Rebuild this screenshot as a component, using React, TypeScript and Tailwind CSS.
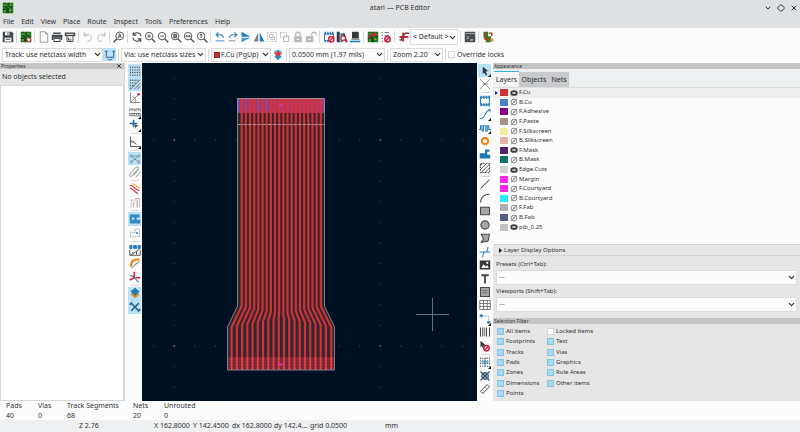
import type { ReactNode } from 'react';
import clsx from 'clsx';
import { ChevronDown, Diamond, X } from 'lucide-react';

type Tool = { name: string; icon: ReactNode; active?: boolean; more?: boolean };

const DARK = '#45484b';
const GREY = '#b4b6b8';
const BLUE = '#2a7fbd';
const RED = '#d2213b';
const ORANGE = '#ee8a1c';

function Icon({ color = DARK, w = 1.4, children }: { color?: string; w?: number; children: ReactNode }) {
  return (
    <svg viewBox="0 0 16 16" className="size-3 shrink-0" fill="none" stroke={color} strokeWidth={w} aria-hidden="true">
      {children}
    </svg>
  );
}

function Magnifier({ children }: { children?: ReactNode }) {
  return (
    <Icon w={1.2}>
      <circle cx="6.8" cy="6.8" r="5" />
      <path d="M10.5 10.5 15 15" strokeWidth="1.8" />
      {children}
    </Icon>
  );
}

function BoardIcon() {
  return (
    <>
      <rect x="1" y="1" width="14" height="14" fill="#1e7a25" stroke="none" />
      <path d="M4 1v5l4 3v6M9 1v4l5 3M1 10h4l2 4" stroke="#0d3f12" strokeWidth="1.4" />
      <path d="M3 3h2v2H3zM10 3h2v2h-2zM3 11h2v2H3zM10 10h2v2h-2z" fill="#a8ae35" stroke="none" />
    </>
  );
}

function NoEntry({ x = 11, y = 11 }: { x?: number; y?: number }) {
  return (
    <g transform={`translate(${x} ${y})`}>
      <circle r="3.6" fill="#fff" stroke={RED} strokeWidth="2" />
      <path d="M-2.4 2.4 2.4 -2.4" stroke={RED} strokeWidth="2" />
    </g>
  );
}

const gridDots = [3, 6.5, 10, 13.5].flatMap((y) => [2, 5, 8, 11, 14].map((x) => [x, y]));

function Dots({ half }: { half?: boolean }) {
  return (
    <g fill={DARK} stroke="none">
      {gridDots
        .filter(([x, y]) => !half || x + y < 16)
        .map(([x, y]) => <circle key={`${x}-${y}`} cx={x} cy={y} r=".9" />)}
    </g>
  );
}

const fileTools: Tool[][] = [
  [{
    name: 'Save',
    icon: (
      <Icon>
        <path d="M1 1h12l2 2v12H1z" fill={DARK} stroke="none" />
        <path d="M4 1.5h6v4H4zM3.5 9h9v5h-9z" fill="#fff" stroke="none" />
        <path d="M8 2v3M5 11h6" />
      </Icon>
    ),
  }],
  [{
    name: 'Board setup',
    icon: <Icon><BoardIcon /><circle cx="11.5" cy="11.5" r="2.6" fill="#fff" stroke={RED} strokeWidth="2" strokeDasharray="1.6 .8" /></Icon>,
  }],
  [
    { name: 'Page settings', icon: <Icon color="#8f9193" w={1.2}><path d="M3 1h7l3 3v11H3zM10 1v3h3" /></Icon> },
    {
      name: 'Print',
      icon: <Icon><path d="M3 2h10v2H3zM1 5h14v7h-2V9H3v3H1z" fill={DARK} stroke="none" /><path d="M4 10h8v4H4z" /></Icon>,
    },
    {
      name: 'Plot',
      icon: (
        <Icon>
          <path d="M1 2h14v5H1z" fill={DARK} stroke="none" />
          <path d="M3 4.5h10" stroke="#ddd" />
          <path d="M4 7v7h8V7M6 9v3h4" strokeWidth="1.3" />
        </Icon>
      ),
    },
  ],
  [
    { name: 'Undo', icon: <Icon color={GREY} w={1.3}><path d="M3 2v4.5h4.5M3 6.5C6 3 12.5 4 12.5 9c0 3-2 5-5.500 5" /></Icon> },
    { name: 'Redo', icon: <Icon color={GREY} w={1.3}><path d="M13 2v4.5H8.5M13 6.5C10 3 3.500 4 3.500 9c0 3 2 5 5.500 5" /></Icon> },
  ],
  [{
    name: 'Find',
    icon: <Icon w={1.2}><circle cx="9" cy="6.5" r="5.2" /><path d="M5.2 10.3 1 15" strokeWidth="2" /><path d="M7 9l2-5.500L11 9M7.5 7.5h3" /></Icon>,
  }],
  [
    { name: 'Refresh', icon: <Icon><path d="M2.5 9a5.700 5.700 0 0 0 10.4 2M13.5 7A5.700 5.700 0 0 0 3 5M3 1.5v4h4M13 14.5v-4H9" /></Icon> },
    { name: 'Zoom in', icon: <Magnifier><path d="M4.3 6.8h5M6.8 4.3v5" /></Magnifier> },
    { name: 'Zoom out', icon: <Magnifier><path d="M4.3 6.8h5" /></Magnifier> },
    { name: 'Zoom to fit page', icon: <Magnifier><path d="M5 4.5h3.600v4.600H5z" fill="#8d9092" /></Magnifier> },
    { name: 'Zoom to fit objects', icon: <Magnifier><path d="M4 7h5.600M5.5 5.5 4 7l1.500 1.500M8.200 5.500 9.700 7 8.200 8.500" /></Magnifier> },
    { name: 'Zoom to selection', icon: <Magnifier><path d="M6.8 3.5v6M5.2 6l1.600-2 1.600 2" /></Magnifier> },
  ],
  [
    {
      name: 'Rotate counterclockwise',
      icon: <Icon color={BLUE}><path d="M3 5h6a3.500 3.500 0 0 1 3.500 3.500V9M6 1.800 2.800 5 6 8" /><path d="M2 12h12v2H2z" fill="#88b8da" stroke="none" /></Icon>,
    },
    {
      name: 'Rotate clockwise',
      icon: <Icon color={BLUE}><path d="M13 5H7a3.500 3.500 0 0 0-3.500 3.500V9M10 1.800 13.200 5 10 8" /><path d="M2 12h9v2H2z" fill={GREY} stroke="none" /></Icon>,
    },
    {
      name: 'Flip vertically',
      icon: <Icon><path d="M2 1v6.500h12z" fill="#1f78bd" stroke="none" /><path d="M2 15V9h12z" fill="#4a98cf" stroke="none" /></Icon>,
    },
    {
      name: 'Flip horizontally',
      icon: <Icon><path d="M7 2v12H1z" fill="#7d8184" stroke="none" /><path d="M9 2v12h6z" fill="#1f78bd" stroke="none" /></Icon>,
    },
    {
      name: 'Group',
      icon: <Icon color={GREY} w={1.2}><path d="M2 2h12v12H2z" strokeDasharray="2 1.500" /><path d="M4.5 4.5h5v4h-5zM7.5 8.5h4v3h-4z" /></Icon>,
    },
    {
      name: 'Ungroup',
      icon: <Icon color={GREY} w={1.3}><path d="M2 2h8v7H2z" strokeDasharray="2 1.500" /><path d="M6 7h7v7H6z" /></Icon>,
    },
    {
      name: 'Lock',
      icon: <Icon color={GREY}><path d="M3 7h10v8H3z" fill={GREY} stroke="none" /><path d="M5 7V4.500a3 3 0 0 1 6 0V7" /><path d="M6 11h4" stroke="#fff" /></Icon>,
    },
    {
      name: 'Unlock',
      icon: <Icon color={GREY}><path d="M1 7h10v8H1z" fill={GREY} stroke="none" /><path d="M9 7V4.500a3 3 0 0 1 6 0V6" /><path d="M4 11h4" stroke="#fff" /></Icon>,
    },
  ],
  [
    {
      name: 'Footprint editor',
      icon: <Icon color={BLUE}><path d="M2 4h12v9H2z" /><path d="M3 1v4M6.5 1v4M10 1v4M13 1v4M3 12v3M6.5 12v3" strokeWidth="2" /><NoEntry /></Icon>,
    },
    {
      name: 'Footprint library browser',
      icon: (
        <Icon>
          <path d="M1 1h4v14H1z" fill="#293d4c" stroke="none" />
          <path d="M6 3h3v12H6z" fill="#3a6f98" stroke="none" />
          <path d="m10 3 4 11" stroke="#293d4c" strokeWidth="2.5" />
          <circle cx="9.5" cy="9.5" r="3" stroke={RED} fill="#fff" />
          <path d="m12 12 3 3" stroke={RED} strokeWidth="2" />
        </Icon>
      ),
    },
    {
      name: '3D viewer',
      icon: <Icon><path d="M4 1h9v9H4z" fill="#343638" stroke="none" /><path d="M3 11h11" stroke="#6d7072" /><path d="M1 14h14" stroke={BLUE} strokeWidth="2.2" /></Icon>,
    },
  ],
  [
    {
      name: 'Update PCB from schematic',
      icon: <Icon><BoardIcon /><path d="M2 9c3-5 6-5 9-4M9 2l3 3-4 2" stroke={RED} strokeWidth="2" /></Icon>,
    },
    {
      name: 'Design rules checker',
      icon: <Icon color="#7d8184"><path d="M2 2h2M6 2h6M2 6h2M6 6h6M2 10h2M2 14h2" /><NoEntry x={10} y={11} /></Icon>,
    },
  ],
];

const viewportTool: Tool = {
  name: 'Viewport',
  icon: <Icon><path d="M2 8h12M7 2v12" stroke={RED} strokeWidth="2.5" /><path d="M2 12h3V8l5-5h5" stroke="#5e4939" strokeWidth="2" /></Icon>,
};

const consoleTool: Tool = {
  name: 'Scripting console',
  icon: <Icon><path d="M1 1h14v14H1z" fill="#4b4e51" stroke="none" /><path d="M2 3.5h12" stroke="#c9cbcd" strokeWidth="1" /><path d="m4 7 2 2-2 2M8 12h4" stroke="#f2f2f2" strokeWidth="1.2" /></Icon>,
};

const pluginTool: Tool = {
  name: 'Plugin manager',
  icon: <Icon><path d="M2 1h6v6h4v8H5V9H2z" fill="#2f7a2a" stroke="none" /><path d="M4 2v9h6M9 3h4v4" stroke="#9b4b18" strokeWidth="2" /><path d="M11 10h4v4h-4z" fill={ORANGE} stroke="none" /></Icon>,
};

const trackTool: Tool = {
  name: 'Use existing track width',
  active: true,
  icon: <Icon color="#36658a" w={1.3}><path d="M3 3v8h10V3M1 3h4M11 3h4M5 13l3 2 3-2" /></Icon>,
};

const layerPairTool: Tool = {
  name: 'Layer pair',
  icon: <Icon><path d="m8 6 5 4-5 5-5-5z" fill="#2795d4" stroke="none" /><path d="m8 2 5 4-5 5-5-5z" fill="#d43c4b" stroke="none" /><path d="M3 5C5 1 11 1 13 5" stroke="#2795d4" /></Icon>,
};

const displayTools: Tool[][] = [
  [
    { name: 'Show grid', active: true, icon: <Icon><Dots /></Icon> },
    { name: 'Grid overrides', active: true, icon: <Icon w={1}><Dots half /><path d="M2 15 15 2M7 15l8-8M11 15l4-4" /></Icon> },
    {
      name: 'Polar coordinates',
      icon: <Icon color="#7c7f82" w={1.2}><path d="M2 1v13h13M2 14 12 4M5 6c3 1 4 4 4 8" /><circle cx="13" cy="3" r="1.8" fill={RED} stroke="none" /></Icon>,
    },
    {
      name: 'Units',
      more: true,
      icon: <Icon color="#6d7072" w={1.2}><path d="M1 7V4h3v3M4 4h3v3M9 7V4h3v3M12 4h3v3M1 10h14v3H1zM4 10v2M7 10v2M10 10v2M13 10v2" /></Icon>,
    },
    {
      name: 'Crosshair',
      more: true,
      icon: <Icon color="#1f6ca8" w={2}><path d="M6 1v10M1 6h10" /><path d="m7 7 6 2-3 1-1 3z" fill={DARK} stroke="none" /></Icon>,
    },
  ],
  [{ name: 'Line modes', more: true, icon: <Icon w={1.2}><path d="M2 1v13h13M2 8h4l4 3M4 6l2 2" /></Icon> }],
  [
    {
      name: 'Ratsnest',
      active: true,
      icon: <Icon color="#6d8190" w={1}><circle cx="3" cy="4" r="1.5" /><circle cx="13" cy="4" r="1.5" /><circle cx="3" cy="12" r="1.5" /><circle cx="13" cy="12" r="1.5" /><path d="m4 5 8 6M4 11l8-6M5 4h6" /></Icon>,
    },
    {
      name: 'Curved ratsnest',
      icon: <Icon color="#7c7f82" w={1.1}><path d="M1 11 9 2c2-2 5 0 3 2l-8 9c-2 2-5 0-3-2M6 13l7-8M9 15l6-7" /></Icon>,
    },
  ],
  [
    {
      name: 'Net highlighting',
      icon: <Icon color={RED}><path d="M1 3c6 0 5 5 13 7M1 7c5 0 5 5 11 7" /><path d="M4 1c5 0 5 5 11 6" stroke="#efaa28" /></Icon>,
    },
    {
      name: 'Net colors',
      icon: <Icon color={GREY} w={1.2}><path d="M3 14V4h8v10M6 14V7h2M14 14V2H8" /><path d="M11 6v8" stroke="#d38d8d" /></Icon>,
    },
  ],
  [
    {
      name: 'Filled zones',
      active: true,
      icon: <Icon><path d="M1 2h13v4h-4v3h5v5H1z" fill="#3089c2" stroke="none" /><path d="M4 6h3v3H4z" fill="#bde4f6" stroke="none" /></Icon>,
    },
    {
      name: 'Zone outlines',
      icon: <Icon color="#7f9fb6" w={1.2}><path d="M2 13V7h6V3h6v10z" strokeDasharray="2 1.300" /><path d="M9 8h3" stroke={BLUE} strokeWidth="2" /></Icon>,
    },
  ],
  [
    {
      name: 'Sketch pads',
      icon: <Icon color={BLUE} w={1.2}><path d="M1 2h3v4H1zM6 2h4v4H6zM12 2h3v4h-3z" fill={BLUE} /><path d="M1 8v7h14V8M2 15 14 7M5 11v2M10 10v4" stroke={DARK} /></Icon>,
    },
    {
      name: 'Sketch vias',
      icon: <Icon><path d="M3 13C2 5 6 3 14 3" stroke={ORANGE} strokeWidth="3" /><path d="M3 15 15 5M8 11c0-2 2-3 4-3" stroke="#777" strokeWidth="1" /></Icon>,
    },
    {
      name: 'Sketch tracks',
      icon: <Icon><path d="M7 1v8L1 12M9 9h6" stroke={RED} strokeWidth="2.2" /><path d="m7 9 6 6M2 6l5 2" stroke="#2e6697" /></Icon>,
    },
  ],
  [
    {
      name: 'Appearance manager',
      active: true,
      icon: <Icon><path d="m8 5 6 5-6 5-6-5z" fill={ORANGE} stroke="none" /><path d="m8 1 6 5-6 6-6-6z" fill="#2379b8" stroke="none" /></Icon>,
    },
    {
      name: 'Properties manager',
      active: true,
      icon: <Icon color="#245e86" w={2.2}><path d="M3 3 13 13M13 3 3 13" /><path d="M1 5l3-3M12 14l3-3" /></Icon>,
    },
  ],
];

const drawTools: Tool[][] = [
  [
    { name: 'Select', active: true, more: true, icon: <Icon><path d="m5 2 7 6-3 1 2 4-2 1-2-4-2 2z" fill="#34373a" stroke="none" /></Icon> },
    { name: 'Local ratsnest', icon: <Icon color="#888b8d" w={1.2}><path d="M1 1 15 15M15 1 1 15M4 8h8" /></Icon> },
  ],
  [
    { name: 'Place footprint', icon: <Icon color={BLUE}><path d="M2 3h12v10H2z" /><path d="M3 1v4M6.5 1v4M10 1v4M13.5 1v4M3 11v4M6.500 11v4M10 11v4M13.5 11v4" strokeWidth="2.2" /></Icon> },
    { name: 'Route tracks', more: true, icon: <Icon color={BLUE}><path d="M1 14c9 1 5-10 13-11" /><circle cx="14" cy="3" r="1" /></Icon> },
    { name: 'Tune length', more: true, icon: <Icon color={BLUE} w={1.5}><path d="M0 10h2V5h2v7h2V5h3v7h2V5h2v5h3" /></Icon> },
    { name: 'Place via', icon: <Icon color={ORANGE} w={3}><circle cx="8" cy="8" r="4.2" /></Icon> },
    { name: 'Draw filled zone', icon: <Icon><path d="M8 2h6v3h-3v4h4v5H1V7h7z" fill="#1f78b5" stroke="none" /></Icon> },
    { name: 'Draw rule area', icon: <Icon w={1.2}><path d="M1 6l5-5M1 11 11 1M2 15 15 2M7 15l8-8M12 15l3-3" /><path d="M2 2h12v12H2z" strokeDasharray="2 1.500" /></Icon> },
  ],
  [
    { name: 'Draw line', icon: <Icon><path d="M2 14 14 2" /></Icon> },
    { name: 'Draw arc', icon: <Icon><path d="M2 14C2 7 7 3 14 3" /></Icon> },
    { name: 'Draw rectangle', icon: <Icon><path d="M2 3h12v10H2z" fill="#a3a5a7" /></Icon> },
    { name: 'Draw circle', icon: <Icon><circle cx="8" cy="8" r="5.5" fill="#a3a5a7" /></Icon> },
    { name: 'Draw polygon', icon: <Icon><path d="M3 3h11l-2 9-9 2 3-5z" fill="#a3a5a7" /></Icon> },
    { name: 'Draw bezier', icon: <Icon color={BLUE}><path d="M1 8h14M5 15c0-4 1-5 2-7M12 1c0 4-1 5-2 7" /></Icon> },
    { name: 'Place image', icon: <Icon><path d="M1 2h14v12H1z" fill="#34373a" stroke="none" /><path d="m3 12 3-5 3 3 2-2 2 4z" fill="#fff" stroke="none" /><circle cx="11" cy="5" r="1.5" fill="#fff" stroke="none" /></Icon> },
    { name: 'Place text', icon: <Icon w={2.4}><path d="M3 3h10M8 3v11" /></Icon> },
    { name: 'Draw text box', icon: <Icon><path d="M2 2h12v12H2z" fill="#a3a5a7" /><path d="M5 6h6M5 9h6" stroke="#6d7072" /></Icon> },
    { name: 'Draw table', icon: <Icon color="#6d7072" w={1.2}><path d="M1 2h14v12H1zM1 6h14M1 10h14M6 2v12M11 2v12" /></Icon> },
    { name: 'Add dimension', more: true, icon: <Icon color="#7aa5c5" w={1.2}><path d="M3 5v2M5 4h8v8" strokeDasharray="2 1" /><path d="M1 2h4v3H1zM11 11h4v3h-4z" fill="#1f78b5" stroke="none" /></Icon> },
    { name: 'Add barcode', icon: <Icon><path d="M2 2v12M5 2v12M10 2v12M14 2v12" /><path d="M7.5 2v12" strokeWidth="1" /></Icon> },
    { name: 'Delete items', icon: <Icon><path d="m2 1 7 6-3 1 1 3-2 0-1-3-2 2z" fill="#34373a" stroke="none" /><NoEntry x={10} y={11} /></Icon> },
  ],
  [
    { name: 'Grid origin', more: true, icon: <Icon color={BLUE}><Dots /><path d="M8 3v10M3 8h10" /></Icon> },
    { name: 'Drill origin', icon: <Icon color="#2d6d99" w={1.5}><circle cx="8" cy="8" r="4.5" fill="#7ab6dc" /><path d="M2 2 14 14M14 2 2 14" stroke={DARK} /></Icon> },
    { name: 'Measure', icon: <Icon w={1.3}><path d="M2 11 11 2l3 3-9 9zM5 9l1 1M8 6l1 1" /></Icon> },
  ],
];

type Layer = { name: string; swatch: string; visible?: boolean };

const layers: Layer[] = [
  { name: 'F.Cu', swatch: 'bg-[#c83434]', visible: true },
  { name: 'B.Cu', swatch: 'bg-[#4d7fc4]' },
  { name: 'F.Adhesive', swatch: 'bg-[#840084]' },
  { name: 'F.Paste', swatch: 'bg-[#a3918b]' },
  { name: 'F.Silkscreen', swatch: 'bg-[#f2eda1]' },
  { name: 'B.Silkscreen', swatch: 'bg-[#e8b2a7]' },
  { name: 'F.Mask', swatch: 'bg-[#55256a]', visible: true },
  { name: 'B.Mask', swatch: 'bg-[#0d7367]' },
  { name: 'Edge.Cuts', swatch: 'bg-[#d0d2cd]', visible: true },
  { name: 'Margin', swatch: 'bg-[#ff26e2]' },
  { name: 'F.Courtyard', swatch: 'bg-[#ff26e2]' },
  { name: 'B.Courtyard', swatch: 'bg-[#26e9ff]' },
  { name: 'F.Fab', swatch: 'bg-[#afafaf]' },
  { name: 'B.Fab', swatch: 'bg-[#585d84]' },
  { name: 'pib_0.25', swatch: 'bg-[#c2c2c2]', visible: true },
];

const filters = [
  'All items', 'Locked items', 'Footprints', 'Text', 'Tracks', 'Vias', 'Pads', 'Graphics',
  'Zones', 'Rule Areas', 'Dimensions', 'Other items', 'Points',
];

const stats = [
  { label: 'Pads', value: 40, width: 'w-8' },
  { label: 'Vias', value: 0, width: 'w-[29px]' },
  { label: 'Track Segments', value: 68, width: 'w-[66px]' },
  { label: 'Nets', value: 20, width: 'w-[31px]' },
  { label: 'Unrouted', value: 0, width: 'w-12' },
];

function ToolButton({ tool, className = 'size-[13px]' }: { tool: Tool; className?: string }) {
  return (
    <button
      type="button"
      aria-label={tool.name}
      aria-pressed={tool.active}
      className={clsx('relative flex items-center justify-center', className, tool.active && 'bg-[#b9e2f6]')}
    >
      {tool.icon}
      {tool.more && (
        <svg viewBox="0 0 3 3" className="absolute right-0 bottom-0 size-[3px]" aria-hidden="true">
          <path d="M3 0v3H0z" fill="#111" />
        </svg>
      )}
    </button>
  );
}

function Divider() {
  return <span className="mx-[2px] h-3 w-px shrink-0 bg-[#d5d6d7]" />;
}

function SideToolbar({ groups, label, className }: { groups: Tool[][]; label: string; className: string }) {
  return (
    <div role="toolbar" aria-label={label} className={clsx('flex flex-col', className)}>
      {groups.map((group, i) => (
        <div key={group[0].name} className="contents">
          {i > 0 && <span className="mx-[3px] my-px h-px shrink-0 bg-[#d5d6d7]" />}
          {group.map((tool) => (
            <ToolButton key={tool.name} tool={tool} className="min-h-0 w-[13px] flex-1" />
          ))}
        </div>
      ))}
    </div>
  );
}

function Dropdown({ label, value, className, swatch }: { label: string; value: string; className: string; swatch?: boolean }) {
  return (
    <span className={clsx('relative flex items-center border border-[#dcdddd] bg-[#fcfcfc]', className)}>
      {swatch && <span className="ml-[2px] size-[6px] shrink-0 border border-[#8c2929] bg-[#c83434]" />}
      <select aria-label={label} className={clsx('h-full w-full appearance-none outline-none', swatch ? 'pl-px' : 'pl-[2px]')}>
        <option>{value}</option>
      </select>
      <ChevronDown className="pointer-events-none absolute right-0 size-[9px] text-[#2b2e31]" strokeWidth={3} />
    </span>
  );
}

function PanelCaption({ children }: { children: ReactNode }) {
  return (
    <div className="flex h-[6px] shrink-0 items-center justify-between bg-[#c4c4c4] pr-[2px] pl-px text-[5px] leading-[6px] text-[#333]">
      {children}
    </div>
  );
}

function Check({ label, checked }: { label: string; checked: boolean }) {
  return (
    <label className="flex items-center gap-[2px]">
      <input
        type="checkbox"
        defaultChecked={checked}
        className="size-[7px] shrink-0 appearance-none border border-[#d6d6d6] bg-white checked:border-[#86c3e2] checked:bg-[#a9d8f1]"
      />
      {label}
    </label>
  );
}

function VisibilityIcon({ visible }: { visible?: boolean }) {
  return (
    <svg viewBox="0 0 14 14" className="size-2" fill="none" aria-hidden="true">
      {visible ? (
        <>
          <ellipse cx="7" cy="7" rx="6.5" ry="5" fill="#3c3f41" />
          <ellipse cx="7" cy="7" rx="3.500" ry="1.6" fill="#c8cacb" />
        </>
      ) : (
        <>
          <circle cx="7" cy="7" r="5" stroke="#77797b" strokeWidth="1.5" />
          <path d="M2 12.5 12 1.500M5 7h4" stroke="#77797b" strokeWidth="1.5" />
        </>
      )}
    </svg>
  );
}

const TRACES = 20;

// each trace runs straight down, then fans out to the wider connector pads
const traces = Array.from({ length: TRACES }, (_, i) => {
  const top = 241.7 + (i * 79.1) / (TRACES - 1);
  const bottom = 231.6 + (i * 99.6) / (TRACES - 1);
  const spread = Math.abs(i - (TRACES - 1) / 2) / ((TRACES - 1) / 2);
  return { top, bottom, bendStart: 314 - spread * 8, bendEnd: 318 + spread * 9 };
});

const gridColumns = Array.from({ length: 17 }, (_, i) => 153.1 + i * 20.6);
const gridRows = Array.from({ length: 17 }, (_, i) => 78.2 + i * 20.6);

function dotColor(col: number, row: number) {
  const major = Number(col % 10 === 1) + Number(row % 10 === 3);
  return ['#051c29', '#284042', '#a5b0a8'][major];
}

function BoardCanvas() {
  const outline = 'M237.5 98.5H324.5V306L334.5 327V370H227.5V327L237.5 306Z';
  return (
    <svg viewBox="142 63 335 338" preserveAspectRatio="xMidYMid slice" className="absolute inset-0 size-full" role="img" aria-label="Board layout">
      <rect x="142" y="63" width="335" height="338" fill="#001023" />
      {gridColumns.map((x, c) =>
        gridRows.map((y, r) => <circle key={`${c}-${r}`} cx={x + 0.5} cy={y} r=".7" fill={dotColor(c, r)} />),
      )}
      <path d={outline} fill="#2c2935" />
      <rect x="237.5" y="98" width="87" height="15" fill="#8b3d86" />
      <rect x="228" y="357" width="106" height="13" fill="#702a3a" />
      {traces.map((t) => (
        <g key={t.top}>
          <path
            d={`M${t.top} 98V${t.bendStart}L${t.bottom} ${t.bendEnd}V370`}
            fill="none"
            stroke="#d5302f"
            strokeWidth="2.2"
          />
          <rect x={t.top - 1.6} y="98" width="3.2" height="14.5" fill="#cf3440" />
          <path d={`M${t.bottom} 358V369`} stroke="#e8565a" strokeWidth="1" strokeDasharray="2 1" />
        </g>
      ))}
      <path d="M238.5 99v13M246 99v12M258.5 99v12M266.5 99v12M324 99v13" stroke="#7452bb" strokeWidth="1.6" />
      <path d="M279 105.5h4M279 364.5h4" stroke="#e032b0" strokeWidth="2" />
      <path d="M237.5 124.5H324.5" stroke="#b9a5ad" strokeWidth=".8" strokeDasharray="4 1" />
      <path d={outline} fill="none" stroke="#9a9a9d" strokeWidth=".8" />
      <path d="M416 314.5h33M432.5 298v33" stroke="#68717b" strokeWidth="1" />
    </svg>
  );
}

export default function App() {
  return (
    <div className="flex min-h-screen flex-col bg-[#fcfcfc] font-['Noto_Sans',sans-serif] text-[7px] leading-[10px] text-[#2f3234]">
      <header className="bg-[#dfe0e1]">
        <div className="grid h-4 grid-cols-[1fr_auto_1fr] items-center px-[2px]">
          <Icon><BoardIcon /></Icon>
          <h1>atari — PCB Editor</h1>
          <div className="flex justify-end gap-[5px]">
            <button type="button" aria-label="Minimize"><ChevronDown className="size-2" strokeWidth={3} /></button>
            <button type="button" aria-label="Maximize"><Diamond className="size-2" strokeWidth={3} /></button>
            <button type="button" aria-label="Close"><X className="size-2" strokeWidth={3} /></button>
          </div>
        </div>
        <nav className="flex h-3 items-center gap-[7px] px-[3px]">
          {['File', 'Edit', 'View', 'Place', 'Route', 'Inspect', 'Tools', 'Preferences', 'Help'].map((item) => (
            <button key={item} type="button">{item}</button>
          ))}
        </nav>
      </header>

      <div role="toolbar" aria-label="Main" className="flex h-[18px] items-center px-px">
        {fileTools.map((group, i) => (
          <div key={group[0].name} className="flex items-center">
            {i > 0 && <Divider />}
            {group.map((tool) => <ToolButton key={tool.name} tool={tool} />)}
          </div>
        ))}
        <Divider />
        <ToolButton tool={viewportTool} />
        <Dropdown label="Viewport preset" value="< Default >" className="h-4 w-12" />
        <Divider />
        <ToolButton tool={consoleTool} />
        <Divider />
        <ToolButton tool={pluginTool} />
      </div>

      <div role="toolbar" aria-label="Routing" className="flex h-[17px] items-center px-[2px]">
        <Dropdown label="Track width" value="Track: use netclass width" className="h-[14px] w-[101px]" />
        <ToolButton tool={trackTool} />
        <Divider />
        <Dropdown label="Via size" value="Via: use netclass sizes" className="h-[14px] w-[85px]" />
        <Divider />
        <Dropdown label="Active layer" value="F.Cu (PgUp)" className="h-[14px] w-[60px]" swatch />
        <ToolButton tool={layerPairTool} />
        <Divider />
        <Dropdown label="Grid" value="0.0500 mm (1.97 mils)" className="h-[14px] w-24" />
        <Divider />
        <Dropdown label="Zoom" value="Zoom 2.20" className="h-[14px] w-[53px]" />
        <Divider />
        <Check label="Override locks" checked={false} />
      </div>

      <main className="flex flex-1">
        <aside className="flex w-[125px] shrink-0 flex-col border-r border-[#d5d6d7] bg-[#e6e6e6]">
          <PanelCaption>
            <h2>Properties</h2>
            <button type="button" aria-label="Close properties"><X className="size-[6px]" strokeWidth={4} /></button>
          </PanelCaption>
          <p className="px-[2px] py-[3px]">No objects selected</p>
          <div className="flex-1 border border-[#d5d6d7] bg-white" />
        </aside>

        <div className="w-[17px] shrink-0 pt-px pl-[3px]">
          <SideToolbar groups={displayTools} label="Display" className="h-[250px]" />
        </div>

        <div className="relative min-w-0 flex-1 bg-[#001023]">
          <BoardCanvas />
        </div>

        <div className="w-4 shrink-0 pt-px pl-px">
          <SideToolbar groups={drawTools} label="Drawing" className="h-[332px]" />
        </div>

        <aside className="flex w-[307px] shrink-0 flex-col bg-[#e6e6e6] text-[6px] leading-[9px]">
          <PanelCaption><h2>Appearance</h2></PanelCaption>
          <div role="tablist" className="flex h-[19px] items-end border-b border-[#dcdddd] bg-[#eff0f1] pl-px text-[7px]">
            <button type="button" role="tab" aria-selected="true" className="h-[16px] w-[25px] border-t border-[#3daee9] bg-[#f4f4f4]">Layers</button>
            <button type="button" role="tab" aria-selected="false" className="h-[15px] w-[30px] bg-[#c9cacb]">Objects</button>
            <button type="button" role="tab" aria-selected="false" className="h-[15px] w-5 bg-[#c9cacb]">Nets</button>
          </div>
          <div className="bg-[#fcfcfc] pb-[12px]">
            <ul className="flex h-36 flex-col">
              {layers.map((layer, i) => (
                <li key={layer.name} className={clsx('flex flex-1 items-center pl-[2px]', i === 0 && 'bg-[#efefef]')}>
                  <span className="w-[5px]">
                    {i === 0 && (
                      <svg viewBox="0 0 3 4" className="h-1 w-[3px]" aria-hidden="true"><path d="M0 0v4l3-2z" fill="#2a2ad8" /></svg>
                    )}
                  </span>
                  <span className={clsx('h-[7px] w-2', layer.swatch)} />
                  <button type="button" aria-label={`Toggle ${layer.name}`} className="mr-px ml-[2px]">
                    <VisibilityIcon visible={layer.visible} />
                  </button>
                  <span>{layer.name}</span>
                </li>
              ))}
            </ul>
          </div>
          <button type="button" className="flex h-3 shrink-0 items-center gap-[2px] border-y border-[#d2d3d3] pl-[6px]">
            <svg viewBox="0 0 3 5" className="h-[5px] w-[3px]" aria-hidden="true"><path d="M0 0v5l3-2.500z" fill="#111" /></svg>
            Layer Display Options
          </button>
          <div className="px-[3px] pt-1 pb-[6px]">
            <p>Presets (Ctrl+Tab):</p>
            <Dropdown label="Presets" value="---" className="mt-px h-[15px]" />
            <p className="mt-[2px]">Viewports (Shift+Tab):</p>
            <Dropdown label="Viewports" value="---" className="mt-px h-[15px]" />
          </div>
          <PanelCaption><h2>Selection Filter</h2></PanelCaption>
          <div className="mt-[2px] ml-1 grid h-[73px] auto-rows-fr grid-cols-[50px_1fr]">
            {filters.map((name) => <Check key={name} label={name} checked={name !== 'Locked items'} />)}
          </div>
        </aside>
      </main>

      <footer>
        <dl className="flex h-[19px] pl-[6px]">
          {stats.map((s) => (
            <div key={s.label} className={s.width}>
              <dt>{s.label}</dt>
              <dd className="leading-[9px]">{s.value}</dd>
            </div>
          ))}
        </dl>
        <div className="flex h-3 items-center bg-[#eff0f1] pl-[79px] whitespace-nowrap">
          <span className="w-[75px]">Z 2.76</span>
          <span className="w-[39px]">X 162.8000</span>
          <span className="w-[39px]">Y 142.4500</span>
          <span className="w-[42px]">dx 162.8000</span>
          <span className="w-9">dy 142.4...</span>
          <span className="w-[75px]">grid 0.0500</span>
          <span>mm</span>
        </div>
      </footer>
    </div>
  );
}
